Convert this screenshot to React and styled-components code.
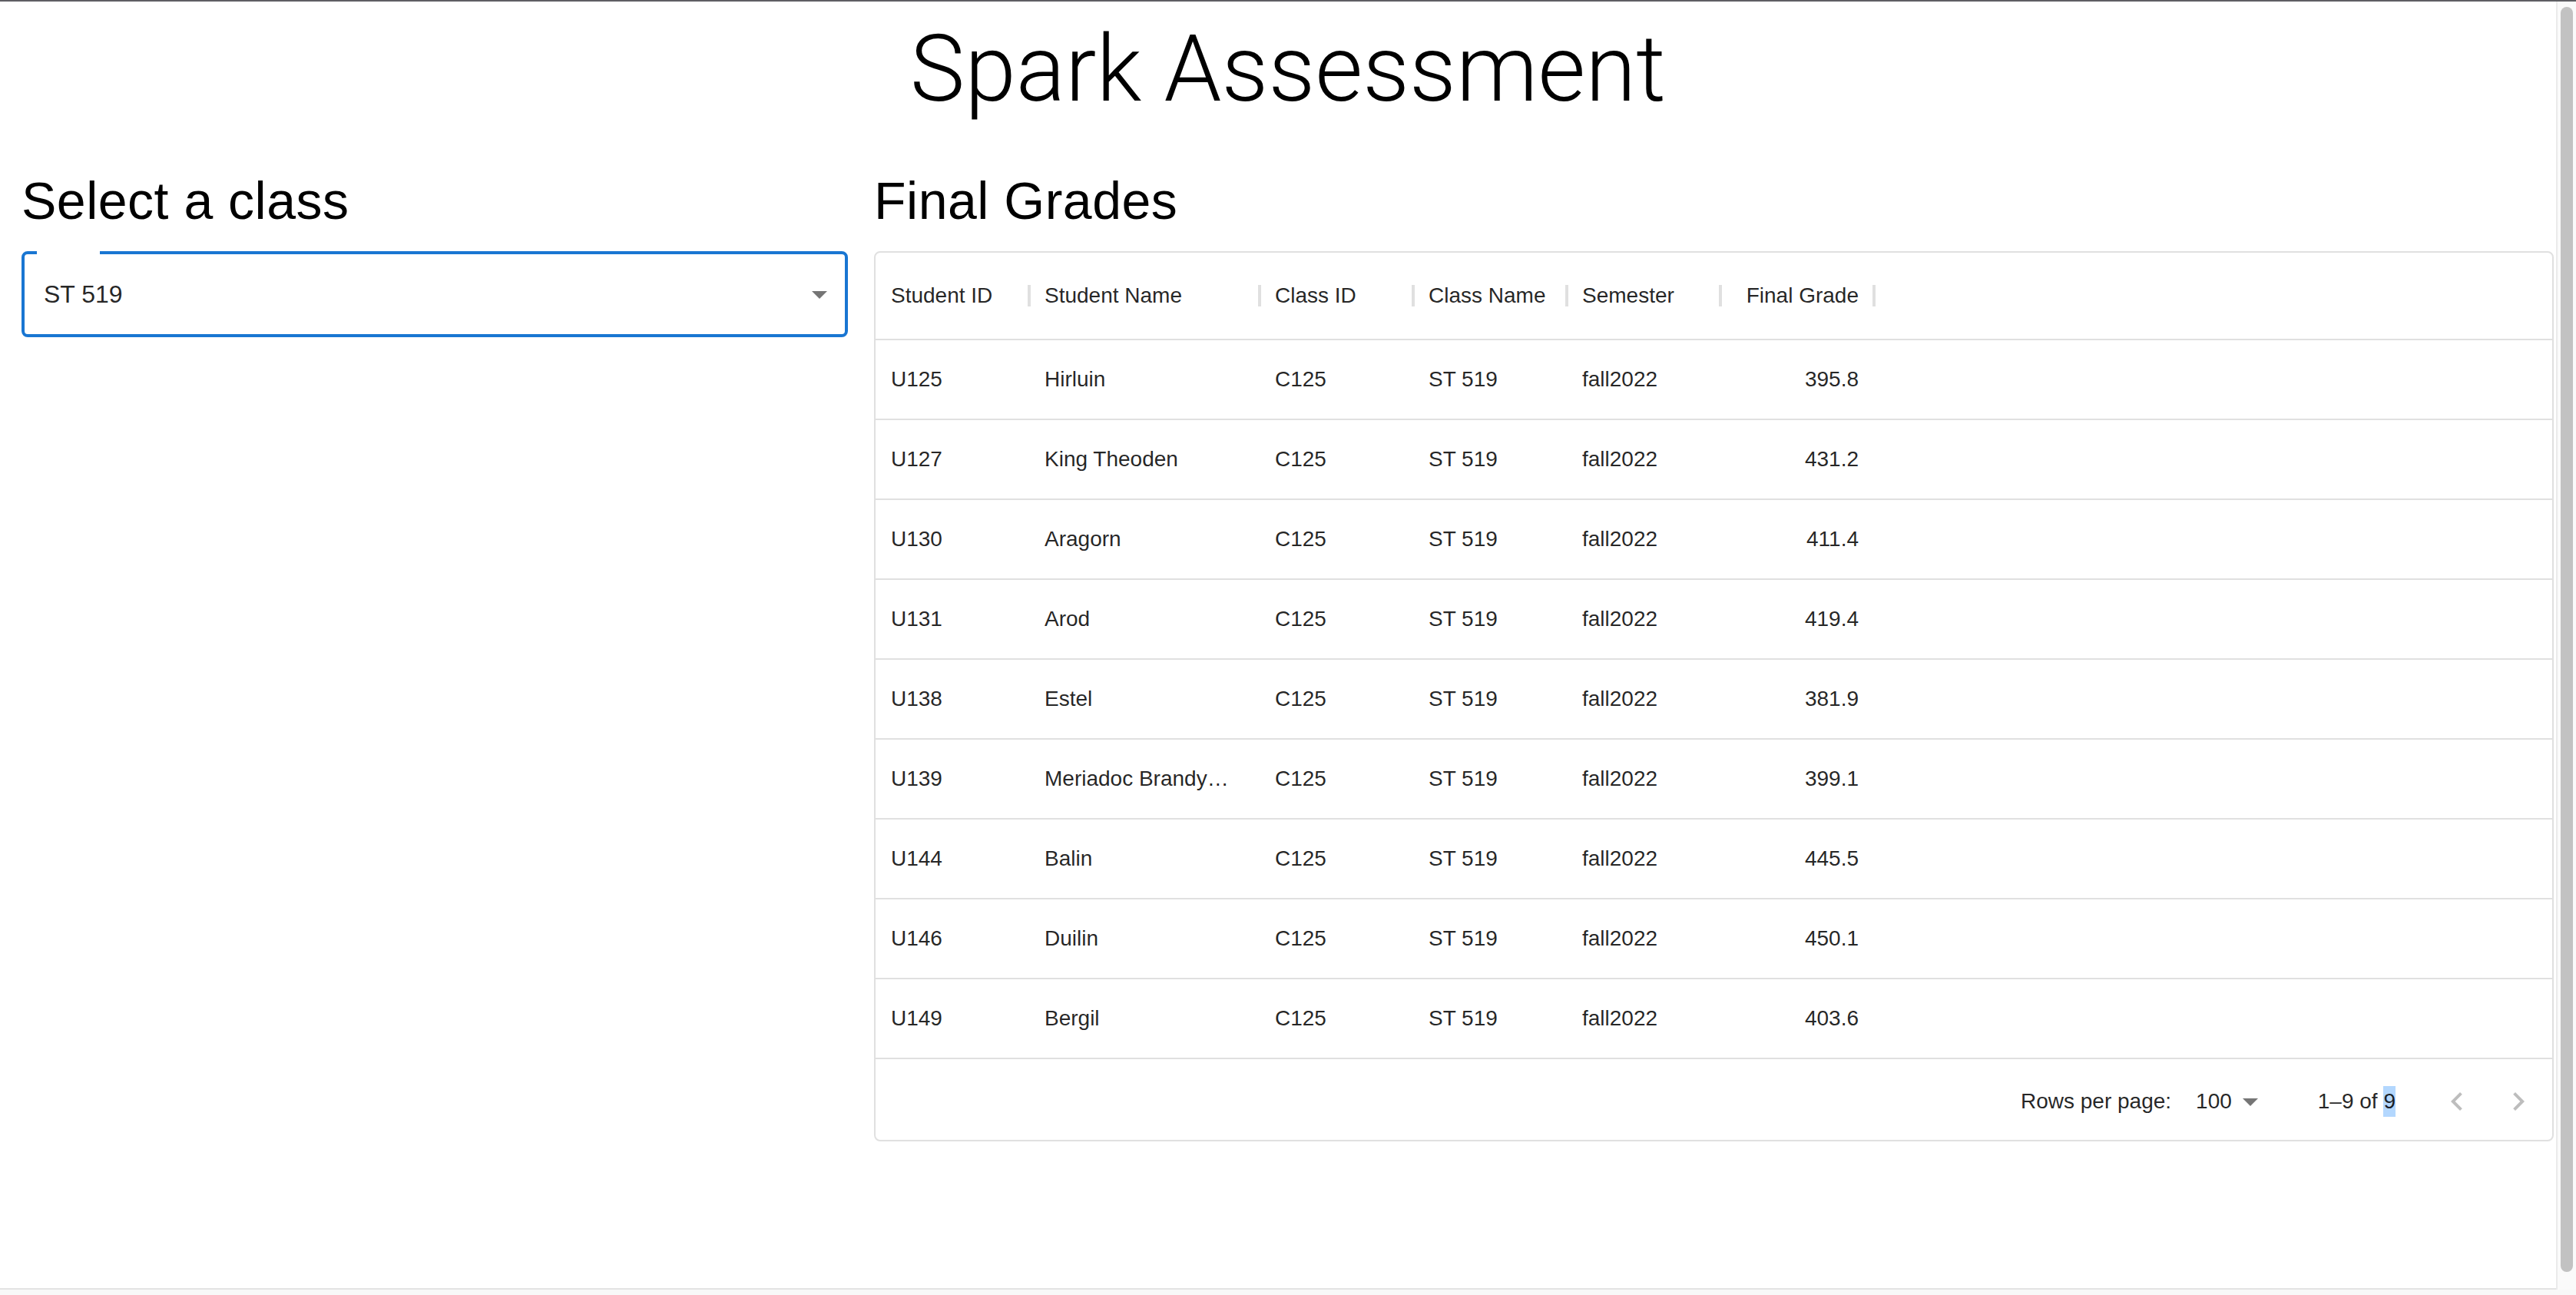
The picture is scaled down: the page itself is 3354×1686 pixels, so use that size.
import React from "react";
import styled, { createGlobalStyle } from "styled-components";

const GlobalStyle = createGlobalStyle`
  html, body { margin: 0; padding: 0; background: #fff; }
  body {
    font-family: "Liberation Sans", Arial, Helvetica, sans-serif;
    color: rgba(0, 0, 0, 0.87);
    overflow: hidden;
  }
  * { box-sizing: border-box; }
`;

const Page = styled.div`
  height: 100vh;
  display: flex;
  flex-direction: column;
  border-top: 2px solid #5f5e63;
`;

const Title = styled.h1`
  margin: 16px 0 0;
  font-family: Roboto, "Liberation Sans", sans-serif;
  font-weight: 300;
  font-size: 120px;
  line-height: 144px;
  letter-spacing: 0;
  text-align: center;
  color: #000;
`;

const Columns = styled.div`
  display: grid;
  grid-template-columns: 1076px 1fr;
  column-gap: 34px;
  padding: 0 29px 0 28px;
  margin-top: 57px;
  align-items: start;
`;

const Column = styled.section`
  display: flex;
  flex-direction: column;
  min-width: 0;
`;

const Heading = styled.h2`
  margin: 0 0 24px;
  font-size: 68px;
  line-height: 84px;
  font-weight: 400;
  letter-spacing: 0.5px;
  color: #000;
`;

const SelectBox = styled.div`
  position: relative;
  height: 112px;
  border: 4px solid #1976d2;
  border-radius: 8px;
  display: flex;
  align-items: center;
  justify-content: space-between;
  padding: 0 9px 0 25px;
  font-size: 32px;
  color: rgba(0, 0, 0, 0.87);
`;

const Notch = styled.span`
  position: absolute;
  top: -4px;
  left: 16px;
  width: 82px;
  height: 4px;
  background: #fff;
`;

const DropIcon = styled.svg`
  width: 48px;
  height: 48px;
  flex: none;
  fill: rgba(0, 0, 0, 0.54);
`;

const Paper = styled.div`
  border: 2px solid #e0e0e0;
  border-radius: 8px;
  overflow: hidden;
  display: flex;
  flex-direction: column;
`;

const GRID = "200px 300px 200px 200px 200px 200px 1fr";

const HeaderRow = styled.div`
  display: grid;
  grid-template-columns: ${GRID};
  height: 114px;
  border-bottom: 2px solid #e0e0e0;
`;

const HeaderCell = styled.div`
  position: relative;
  display: flex;
  align-items: center;
  justify-content: ${(p) => (p.$align === "right" ? "flex-end" : "flex-start")};
  padding: 0 20px;
  font-size: 28px;
  color: rgba(0, 0, 0, 0.87);
  white-space: nowrap;

  ${(p) =>
    p.$sep &&
    `&::after {
      content: "";
      position: absolute;
      right: -2px;
      top: 50%;
      margin-top: -14px;
      width: 4px;
      height: 28px;
      background: #e0e0e0;
      z-index: 1;
    }`}
`;

const Row = styled.div`
  display: grid;
  grid-template-columns: ${GRID};
  height: 104px;
  border-bottom: 2px solid #e0e0e0;
`;

const Cell = styled.div`
  display: flex;
  align-items: center;
  justify-content: ${(p) => (p.$align === "right" ? "flex-end" : "flex-start")};
  padding: 0 ${(p) => p.$pr || 20}px 0 20px;
  font-size: 28px;
  color: rgba(0, 0, 0, 0.87);
  min-width: 0;
`;

const CellText = styled.span`
  overflow: hidden;
  white-space: nowrap;
  text-overflow: ellipsis;
`;

const Footer = styled.div`
  height: 105px;
  display: flex;
  align-items: center;
  justify-content: flex-end;
  padding: 4px 4px 0 0;
  font-size: 28px;
  color: rgba(0, 0, 0, 0.87);
`;

const PageSelect = styled.div`
  display: flex;
  align-items: center;
  margin: 0 64px 0 16px;
  padding-left: 16px;
`;

const Displayed = styled.span`
  white-space: nowrap;
`;

const Highlight = styled.span`
  display: inline-block;
  line-height: 40px;
  background: #b3d7fe;
`;

const Actions = styled.div`
  display: flex;
  margin-left: 40px;
`;

const IconButton = styled.button`
  width: 80px;
  height: 80px;
  padding: 16px;
  border: 0;
  background: transparent;
  display: flex;
  align-items: center;
  justify-content: center;

  svg {
    width: 48px;
    height: 48px;
    fill: rgba(0, 0, 0, 0.26);
  }
`;

const ScrollTrack = styled.div`
  position: fixed;
  top: 2px;
  right: 0;
  bottom: 7px;
  width: 26px;
  background: #fafafa;
  border-left: 2px solid #ebebeb;
  padding: 7px 4px 23px 4px;
`;

const ScrollThumb = styled.div`
  height: 100%;
  border-radius: 8px;
  background: #c2c2c2;
`;

const WindowEdge = styled.div`
  margin-top: auto;
  height: 9px;
  border-top: 2px solid #e3e3e3;
  background: #f8f8f8;
`;

const columns = [
  { key: "id", label: "Student ID" },
  { key: "name", label: "Student Name", pr: 32 },
  { key: "classId", label: "Class ID" },
  { key: "className", label: "Class Name" },
  { key: "semester", label: "Semester" },
  { key: "grade", label: "Final Grade", align: "right" },
];

const rows = [
  ["U125", "Hirluin", "395.8"],
  ["U127", "King Theoden", "431.2"],
  ["U130", "Aragorn", "411.4"],
  ["U131", "Arod", "419.4"],
  ["U138", "Estel", "381.9"],
  ["U139", "Meriadoc Brandybuck", "399.1"],
  ["U144", "Balin", "445.5"],
  ["U146", "Duilin", "450.1"],
  ["U149", "Bergil", "403.6"],
].map(([id, name, grade]) => ({
  id,
  name,
  classId: "C125",
  className: "ST 519",
  semester: "fall2022",
  grade,
}));

const Arrow = () => (
  <DropIcon viewBox="0 0 24 24">
    <path d="M7 10l5 5 5-5z" />
  </DropIcon>
);

export default function App() {
  return (
    <>
      <GlobalStyle />
      <Page>
        <Title>Spark Assessment</Title>
        <Columns>
          <Column>
            <Heading>Select a class</Heading>
            <SelectBox>
              <Notch />
              <span>ST 519</span>
              <Arrow />
            </SelectBox>
          </Column>
          <Column>
            <Heading>Final Grades</Heading>
            <Paper>
              <HeaderRow>
                {columns.map((c) => (
                  <HeaderCell key={c.key} $align={c.align} $sep>
                    {c.label}
                  </HeaderCell>
                ))}
                <HeaderCell />
              </HeaderRow>
              {rows.map((r) => (
                <Row key={r.id}>
                  {columns.map((c) => (
                    <Cell key={c.key} $align={c.align} $pr={c.pr}>
                      <CellText>{r[c.key]}</CellText>
                    </Cell>
                  ))}
                  <Cell />
                </Row>
              ))}
              <Footer>
                <span>Rows per page:</span>
                <PageSelect>
                  <span>100</span>
                  <Arrow />
                </PageSelect>
                <Displayed>
                  1–9 of <Highlight>9</Highlight>
                </Displayed>
                <Actions>
                  <IconButton aria-label="previous page">
                    <svg viewBox="0 0 24 24">
                      <path d="M15.41 16.59 10.83 12l4.58-4.59L14 6l-6 6 6 6 1.41-1.41z" />
                    </svg>
                  </IconButton>
                  <IconButton aria-label="next page">
                    <svg viewBox="0 0 24 24">
                      <path d="M8.59 16.59 13.17 12 8.59 7.41 10 6l6 6-6 6-1.41-1.41z" />
                    </svg>
                  </IconButton>
                </Actions>
              </Footer>
            </Paper>
          </Column>
        </Columns>
        <WindowEdge />
      </Page>
      <ScrollTrack>
        <ScrollThumb />
      </ScrollTrack>
    </>
  );
}
